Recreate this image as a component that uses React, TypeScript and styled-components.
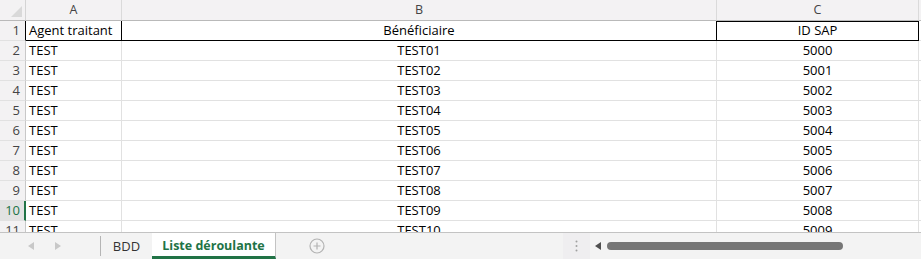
import React from 'react';
import styled, { createGlobalStyle, css } from 'styled-components';

const GlobalStyle = createGlobalStyle`
	body {
		margin: 0;
		background: #fff;
		font-family: 'Open Sans', 'Liberation Sans', sans-serif;
	}
`;

const GREEN = '#217346';

const rows = Array.from({ length: 10 }, (_, i) => ({
	agent: 'TEST',
	name: `TEST${String(i + 1).padStart(2, '0')}`,
	sap: String(5000 + i),
}));

const Sheet = styled.div`
	width: 921px;
	height: 259px;
	display: flex;
	flex-direction: column;
	overflow: hidden;
`;

const Grid = styled.div`
	height: 232px;
	overflow: hidden;
	display: grid;
	grid-template-columns: 26px 96px 595px 202px 1fr;
	grid-template-rows: 21px;
	grid-auto-rows: 20px;
`;

const Corner = styled.div`
	background: #f3f2f3;
	border-right: 1px solid #d4d4d4;
	border-bottom: 1px solid #b9b9b9;
	display: flex;
	justify-content: flex-end;
	align-items: flex-end;
	padding: 0 3px 3px 0;
	box-sizing: border-box;
`;

const ColHead = styled.div`
	background: #f3f2f3;
	border-right: 1px solid #dadada;
	border-bottom: 1px solid #b9b9b9;
	box-sizing: border-box;
	color: #444;
	font-size: 12.5px;
	line-height: 20px;
	text-align: center;
`;

const RowHead = styled.div<{ $selected?: boolean; $dark?: boolean }>`
	background: ${(p) => (p.$selected ? '#e2e2e2' : '#f3f2f3')};
	border-right: ${(p) => (p.$selected ? `2px solid ${GREEN}` : `1px solid ${p.$dark ? '#000' : '#c8c8c8'}`)};
	border-bottom: 1px solid #e1e1e1;
	box-sizing: border-box;
	color: ${(p) => (p.$selected ? GREEN : '#444')};
	font-size: 13px;
	line-height: 19px;
	text-align: right;
	padding-right: ${(p) => (p.$selected ? '4px' : '5px')};
`;

const Cell = styled.div<{ $center?: boolean; $head?: boolean; $top?: boolean }>`
	border-right: 1px solid #e1e1e1;
	border-bottom: 1px solid #e1e1e1;
	box-sizing: border-box;
	color: #000;
	font-size: 13px;
	line-height: 19px;
	padding: 0 3px;
	white-space: nowrap;
	overflow: hidden;
	text-align: ${(p) => (p.$center ? 'center' : 'left')};
	${(p) =>
		p.$head &&
		css`
			border-right-color: #000;
			border-bottom-color: #000;
		`}
	${(p) => p.$top && css`box-shadow: inset 0 1px 0 #000;`}
`;

const TabBar = styled.div`
	height: 27px;
	box-sizing: border-box;
	border-top: 1px solid #c3c3c3;
	background: #f3f3f3;
	display: flex;
	align-items: stretch;
`;

const NavArrows = styled.div`
	width: 100px;
	display: flex;
	align-items: center;
	gap: 21px;
	padding-left: 28px;
	box-sizing: border-box;
`;

const Tab = styled.div<{ $active?: boolean }>`
	display: flex;
	align-items: center;
	justify-content: center;
	box-sizing: border-box;
	font-size: 13px;
	${(p) =>
		p.$active
			? css`
					width: 124px;
					background: #fff;
					color: ${GREEN};
					font-weight: 700;
					font-size: 12.5px;
					border-right: 1px solid #c3c3c3;
					border-bottom: 3px solid ${GREEN};
					padding-top: 2px;
			  `
			: css`
					width: 52px;
					color: #333;
					margin: 3px 0;
					border-left: 1px solid #b5b5b5;
			  `}
`;

const AddButton = styled.div`
	display: flex;
	align-items: center;
	margin-left: 33px;
`;

const Spacer = styled.div`
	flex: 1;
`;

const More = styled.div`
	width: 27px;
	background: #efeef0;
	display: flex;
	align-items: center;
	justify-content: center;
`;

const Scroll = styled.div`
	width: 331px;
	display: flex;
	align-items: center;
	padding-left: 5px;
	gap: 6px;
	box-sizing: border-box;
`;

const Thumb = styled.div`
	width: 236px;
	height: 8px;
	border-radius: 4px;
	background: #767676;
`;

const Arrow = ({ dir, color }: { dir: 'left' | 'right'; color: string }) => (
	<svg width="6" height="8" viewBox="0 0 6 8">
		<path d={dir === 'left' ? 'M6 0 L0 4 L6 8 Z' : 'M0 0 L6 4 L0 8 Z'} fill={color} />
	</svg>
);

const App = () => {
	return (
		<>
			<GlobalStyle />
			<Sheet>
				<Grid>
					<Corner>
						<svg width="11" height="11" viewBox="0 0 11 11">
							<path d="M11 0 L11 11 L0 11 Z" fill="#d9d9d9" />
						</svg>
					</Corner>
					<ColHead>A</ColHead>
					<ColHead>B</ColHead>
					<ColHead>C</ColHead>
					<ColHead />

					<RowHead $dark>1</RowHead>
					<Cell $head>Agent traitant</Cell>
					<Cell $head $center>Bénéficiaire</Cell>
					<Cell $head $center $top>ID SAP</Cell>
					<Cell />

					{rows.map((r, i) => (
						<React.Fragment key={r.name}>
							<RowHead $selected={i + 2 === 10}>{i + 2}</RowHead>
							<Cell>{r.agent}</Cell>
							<Cell $center>{r.name}</Cell>
							<Cell $center>{r.sap}</Cell>
							<Cell />
						</React.Fragment>
					))}
				</Grid>
				<TabBar>
					<NavArrows>
						<Arrow dir="left" color="#c8c8c8" />
						<Arrow dir="right" color="#c8c8c8" />
					</NavArrows>
					<Tab>BDD</Tab>
					<Tab $active>Liste déroulante</Tab>
					<AddButton>
						<svg width="16" height="16" viewBox="0 0 16 16">
							<circle cx="8" cy="8" r="7" fill="none" stroke="#b3b3b3" strokeWidth="1.2" />
							<path d="M8 4.5 V11.5 M4.5 8 H11.5" stroke="#b3b3b3" strokeWidth="1.2" />
						</svg>
					</AddButton>
					<Spacer />
					<More>
						<svg width="3" height="12" viewBox="0 0 3 12">
							<circle cx="1.5" cy="1.5" r="1" fill="#a0a0a0" />
							<circle cx="1.5" cy="6" r="1" fill="#a0a0a0" />
							<circle cx="1.5" cy="10.5" r="1" fill="#a0a0a0" />
						</svg>
					</More>
					<Scroll>
						<Arrow dir="left" color="#505050" />
						<Thumb />
					</Scroll>
				</TabBar>
			</Sheet>
		</>
	);
};

export default App;
